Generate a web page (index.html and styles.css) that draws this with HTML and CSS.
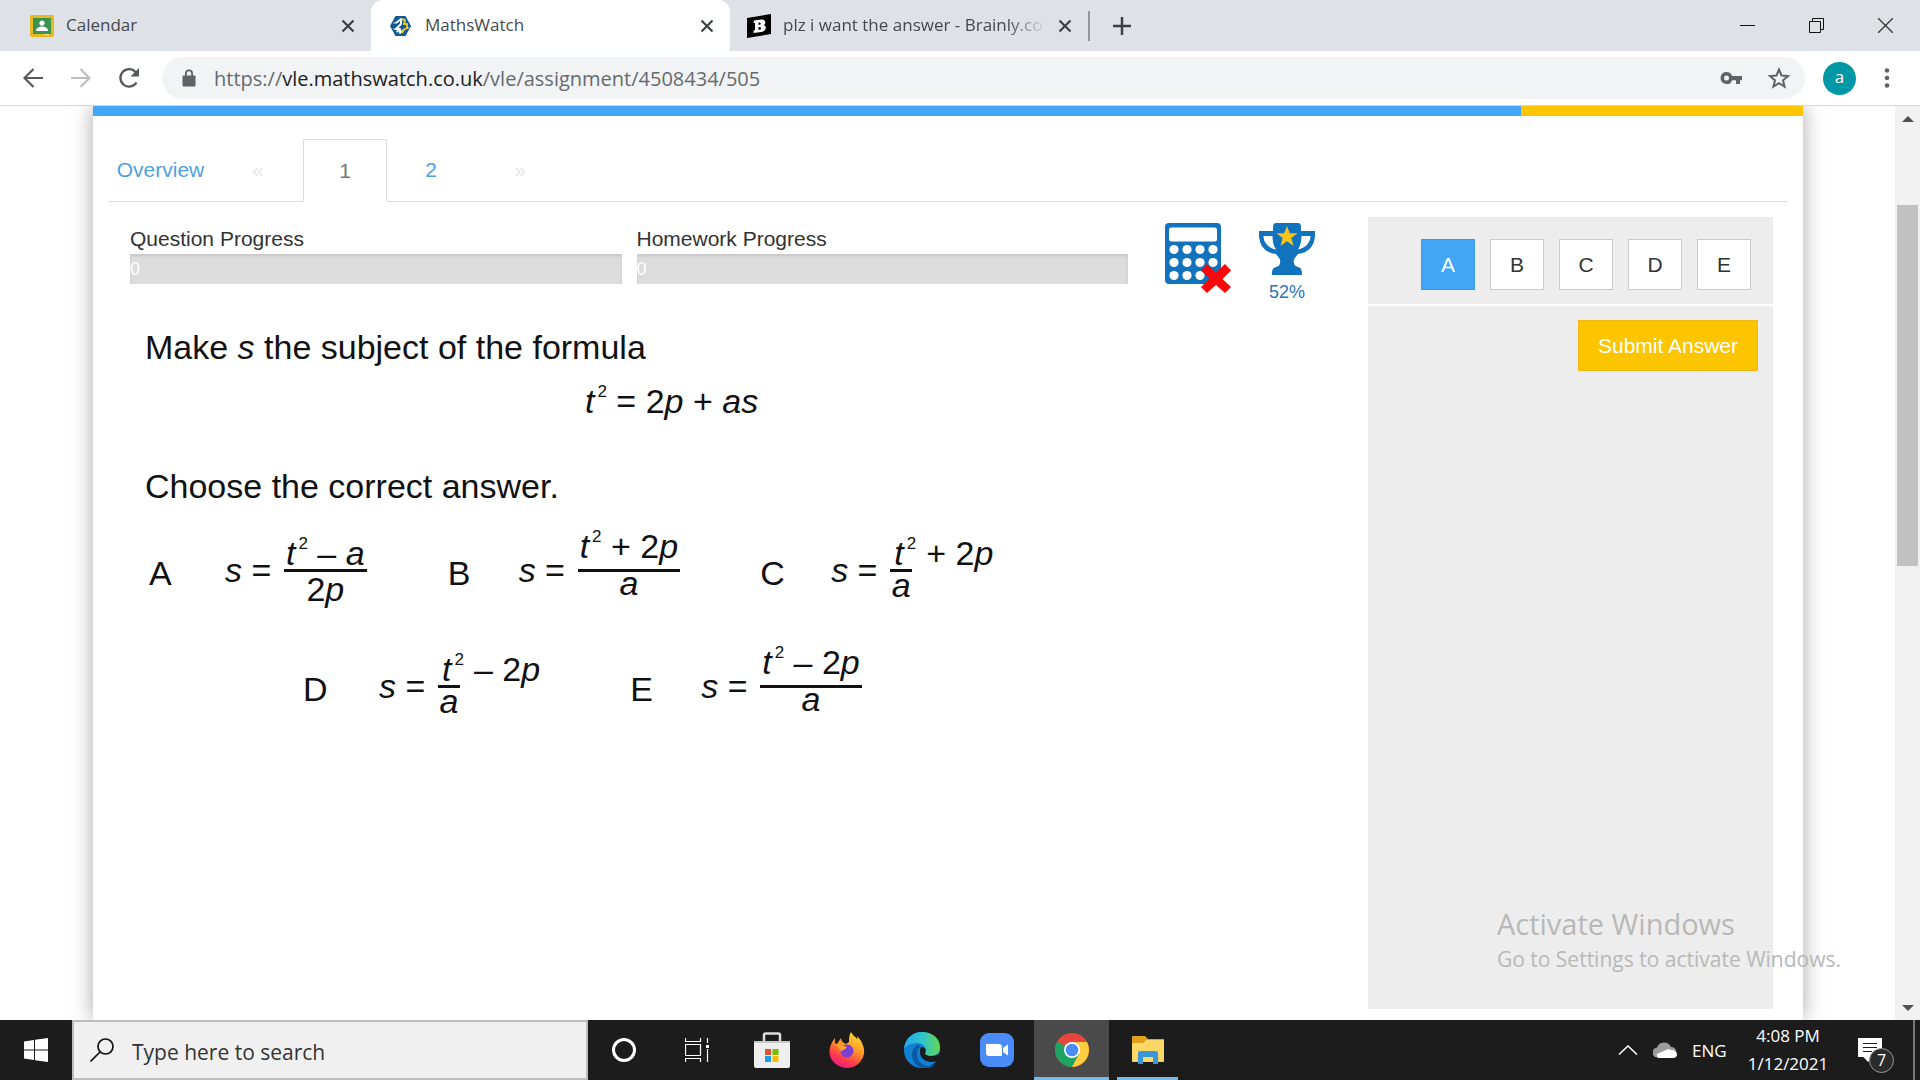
FILE: index.html
```html
<!DOCTYPE html>
<html lang="en">
<head>
<meta charset="utf-8">
<title>MathsWatch</title>
<link rel="stylesheet" href="styles.css">
</head>
<body>
<header class="browser">
  <div class="tabstrip">
    <div class="tab tab-first">
      <svg class="favicon" viewBox="0 0 24 24"><rect x="0" y="1" width="24" height="22" rx="2" fill="#e8b820"/><rect x="3" y="4" width="18" height="16" fill="#3c9350"/><circle cx="12" cy="9" r="2.6" fill="#fff"/><path d="M6 17c0-3 3-4.500 6-4.500s6 1.500 6 4.500z" fill="#fff"/><path d="M14 20h5v1h-5z" fill="#f8e48c"/></svg>
      <span class="tab-title">Calendar</span>
      <button class="icon-btn tab-close" aria-label="Close tab"><svg width="14" height="14" viewBox="0 0 14 14"><path d="M1.500 1.500l11 11M12.500 1.500l-11 11" stroke="#3c4043" stroke-width="2.200"/></svg></button>
    </div>
    <div class="tab tab-active">
      <svg class="favicon" viewBox="0 0 24 24"><path d="M6.500 2h10l5.500 10-5.500 10h-10L1 12z" fill="#125a94"/><path d="M11.500 15l-4 3M7 9l5-4v5l-5 5h4v4l4-3" fill="none" stroke="#fff" stroke-width="1.900" stroke-linejoin="round"/><path d="M12 5l4 1-1 4h3v4l-4 2-1 3M16 6l-1 4" fill="none" stroke="#f4c530" stroke-width="1.900" stroke-linejoin="round"/><path d="M7 9H4.500M7 15H4.500M18 14h2" stroke="#fff" stroke-width="1.200"/></svg>
      <span class="tab-title">MathsWatch</span>
      <button class="icon-btn tab-close" aria-label="Close tab"><svg width="14" height="14" viewBox="0 0 14 14"><path d="M1.500 1.500l11 11M12.500 1.500l-11 11" stroke="#3c4043" stroke-width="2.200"/></svg></button>
    </div>
    <div class="tab tab-last">
      <svg class="favicon" viewBox="0 0 24 24"><path d="M0 4L24 0v20L0 24z" fill="#000"/><path fill="#fff" fill-rule="evenodd" d="M7 6.500L14 5.500c5-.5 5.500 4.500 2.500 5.500 4 1 2.500 6.500-2 7l-8 1v-2.500l1.500-.3V9L6.500 9zM11.500 8.500v2.500c3 0 3-3 0-2.500zM11.500 13v3c3.500 0 3.500-3.500 0-3z"/></svg>
      <span class="tab-title tab-fade">plz i want the answer - Brainly.co</span>
      <button class="icon-btn tab-close" aria-label="Close tab"><svg width="14" height="14" viewBox="0 0 14 14"><path d="M1.500 1.500l11 11M12.500 1.500l-11 11" stroke="#3c4043" stroke-width="2.200"/></svg></button>
    </div>
    <button class="icon-btn new-tab" aria-label="New tab"><svg width="18" height="18" viewBox="0 0 18 18"><path d="M9 0v18M0 9h18" stroke="#3c4043" stroke-width="2.500"/></svg></button>
    <div class="window-controls">
      <button class="icon-btn" aria-label="Minimise"><svg width="15" height="15" viewBox="0 0 15 15"><path d="M0 7.500h15" stroke="#111"/></svg></button>
      <button class="icon-btn" aria-label="Restore"><svg width="15" height="15" viewBox="0 0 15 15"><path d="M.5 3.500h11v11H.5zM3.500 3.500v-3h11v11h-3" fill="none" stroke="#111"/></svg></button>
      <button class="icon-btn" aria-label="Close"><svg width="15" height="15" viewBox="0 0 15 15"><path d="M0 0l15 15M15 0L0 15" stroke="#333" stroke-width="1.300"/></svg></button>
    </div>
  </div>
  <div class="toolbar">
    <button class="icon-btn nav-btn" aria-label="Back"><svg width="20" height="20" viewBox="0 0 20 20"><path d="M20 10H2M10.500 1L1.500 10l9 9" fill="none" stroke="#55585c" stroke-width="2.200"/></svg></button>
    <button class="icon-btn nav-btn" aria-label="Forward"><svg width="20" height="20" viewBox="0 0 20 20"><path d="M0 10h18M9.500 1l9 9-9 9" fill="none" stroke="#bcbec1" stroke-width="2.200"/></svg></button>
    <button class="icon-btn nav-btn" aria-label="Reload"><svg width="22" height="22" viewBox="0 0 22 22"><path d="M18.500 15.500A8.700 8.700 0 1 1 17.500 5" fill="none" stroke="#55585c" stroke-width="2.300"/><path d="M21 1v8.500h-8.500z" fill="#55585c"/></svg></button>
    <div class="omnibox">
      <svg width="14" height="18" viewBox="0 0 14 18"><path fill="#5f6368" fill-rule="evenodd" d="M3 6.500V4.500a4 4 0 0 1 8 0v2h1.500q1 0 1 1V16.500q0 1-1 1h-11q-1 0-1-1V7.500q0-1 1-1zM4.800 6.500h4.400v-2a2.200 2.200 0 0 0-4.400 0z"/></svg>
      <span class="url">https://<b>vle.mathswatch.co.uk</b>/vle/assignment/4508434/505</span>
      <button class="icon-btn" aria-label="Passwords"><svg width="22" height="14" viewBox="0 0 22 14"><path fill="#5f6368" fill-rule="evenodd" d="M6.500 1a6 6 0 0 1 5.700 4H22v4.200h-2V13h-4V9.200h-3.800A6 6 0 1 1 6.500 1zm0 3.600a2.500 2.500 0 1 0 0 5 2.500 2.500 0 0 0 0-5z"/></svg></button>
      <button class="icon-btn star" aria-label="Bookmark this page"><svg width="22" height="22" viewBox="0 0 22 22"><path d="M11 2.500l2.500 6 6.500.6-5 4.200 1.600 6.400L11 16.200l-5.600 3.500L7 13.300 2 9.100l6.500-.6z" fill="none" stroke="#5f6368" stroke-width="2"/></svg></button>
    </div>
    <button class="avatar" aria-label="Profile">a</button>
    <button class="icon-btn menu" aria-label="Menu"><svg width="6" height="20" viewBox="0 0 6 20"><g fill="#5f6368"><circle cx="3" cy="2.500" r="2.300"/><circle cx="3" cy="10" r="2.300"/><circle cx="3" cy="17.500" r="2.300"/></g></svg></button>
  </div>
</header>

<div class="viewport">
  <main class="card">
    <div class="stripe"><div class="stripe-blue"></div><div class="stripe-yellow"></div></div>
    <nav class="pages">
      <a class="page-overview" href="#">Overview</a>
      <a class="page-step" href="#">«</a>
      <a class="page-num page-current" href="#">1</a>
      <a class="page-num" href="#">2</a>
      <a class="page-step" href="#">»</a>
    </nav>
    <div class="columns">
      <section class="work">
        <div class="status">
          <div class="progress"><span>Question Progress</span><div class="bar">0</div></div>
          <div class="progress"><span>Homework Progress</span><div class="bar">0</div></div>
          <svg class="calc" width="66" height="70" viewBox="0 0 66 70"><rect width="56" height="61" rx="4" fill="#1173bd"/><rect x="4" y="4.500" width="48" height="14" rx="2.500" fill="#fff"/><g fill="#fff"><circle cx="9" cy="26.500" r="4.600"/><circle cx="22" cy="26.500" r="4.600"/><circle cx="35" cy="26.500" r="4.600"/><circle cx="48" cy="26.500" r="4.600"/><circle cx="9" cy="39.500" r="4.600"/><circle cx="22" cy="39.500" r="4.600"/><circle cx="35" cy="39.500" r="4.600"/><circle cx="48" cy="39.500" r="4.600"/><circle cx="9" cy="52.500" r="4.600"/><circle cx="22" cy="52.500" r="4.600"/><circle cx="35" cy="52.500" r="4.600"/></g><path d="M42 41l9 8.500L60 41l6 6.500-8.500 8.500L66 64l-6 6-9-8-9 8-6-6 8.500-8.500L36 47.500z" fill="#f80808"/></svg>
          <div class="trophy">
            <svg width="56" height="52" viewBox="0 0 56 52"><path d="M17 0h22q3 0 3 4v4h14c1 13-5 22-17 23-3 4-5 5-4 9 .5 3 2 3.500 4 4 3 1 4 2 4 8H13c0-6 1-7 4-8 2-.5 3.500-1 4-4 1-4-1-5-4-9C5 30-1 21 0 8h14V4q0-4 3-4z" fill="#1173bd"/><path d="M4.500 13h9c0 5 1 10 3.500 13.500C9 25 4.500 19 4.500 13zM51.500 13h-9c0 5-1 10-3.500 13.500C47 25 51.500 19 51.500 13z" fill="#fff"/><path d="M28 3l2.800 7.300h7.700l-6.200 4.800 2.300 7.900-6.600-4.700-6.600 4.700 2.300-7.900-6.200-4.800h7.700z" fill="#fcc419"/></svg>
            <span>52%</span>
          </div>
        </div>
        <article class="question">
          <p>Make <i>s</i> the subject of the formula</p>
          <p class="formula"><i>t</i><sup>2</sup> = 2<i>p</i> + <i>as</i></p>
          <p class="prompt">Choose the correct answer.</p>
          <div class="options">
            <div class="option opt-wide"><span class="letter">A</span><span class="lhs"><i>s</i> =</span><span class="frac"><span class="num"><span><i>t</i><sup>2</sup> – <i>a</i></span></span><span class="den den-low">2<i>p</i></span></span></div>
            <div class="option opt-b"><span class="letter">B</span><span class="lhs"><i>s</i> =</span><span class="frac"><span class="num num-high"><span><i>t</i><sup>2</sup> + 2<i>p</i></span></span><span class="den"><i>a</i></span></span></div>
            <div class="option opt-c"><span class="letter">C</span><span class="lhs"><i>s</i> =</span><span class="frac frac-narrow"><span class="num"><span><i>t</i><sup>2</sup></span></span><span class="den"><i>a</i></span></span><span class="term">+ 2<i>p</i></span></div>
          </div>
          <div class="options options-second">
            <div class="option opt-wide"><span class="letter">D</span><span class="lhs"><i>s</i> =</span><span class="frac frac-narrow"><span class="num"><span><i>t</i><sup>2</sup></span></span><span class="den"><i>a</i></span></span><span class="term">– 2<i>p</i></span></div>
            <div class="option opt-e"><span class="letter">E</span><span class="lhs"><i>s</i> =</span><span class="frac"><span class="num num-high"><span><i>t</i><sup>2</sup> – 2<i>p</i></span></span><span class="den"><i>a</i></span></span></div>
          </div>
        </article>
      </section>
      <aside class="answers">
        <div class="choices">
          <button class="choice chosen" aria-pressed="true">A</button>
          <button class="choice">B</button>
          <button class="choice">C</button>
          <button class="choice">D</button>
          <button class="choice">E</button>
        </div>
        <div class="submit-row"><button class="submit">Submit Answer</button></div>
      </aside>
    </div>
  </main>
  <div class="scrollbar">
    <svg width="12" height="6" viewBox="0 0 12 6"><path d="M0 6l6-6 6 6z" fill="#505050"/></svg>
    <div class="track"><div class="thumb"></div></div>
    <svg width="12" height="6" viewBox="0 0 12 6"><path d="M0 0l6 6 6-6z" fill="#505050"/></svg>
  </div>
  <div class="watermark"><div class="wm-title">Activate Windows</div><div class="wm-text">Go to Settings to activate Windows.</div></div>
</div>

<footer class="taskbar">
  <button class="icon-btn start" aria-label="Start"><svg width="24" height="24" viewBox="0 0 24 24"><path fill="#fff" d="M0 3.500l10-1.500v9.500H0zM11 1.800L24 0v11.500H11zM0 12.500h10V22L0 20.500zM11 12.500h13V24l-13-1.800z"/></svg></button>
  <div class="search">
    <svg width="24" height="24" viewBox="0 0 24 24"><circle cx="15.500" cy="8.500" r="7.500" fill="none" stroke="#111" stroke-width="1.700"/><path d="M10 14L.5 23.500" stroke="#111" stroke-width="1.700"/></svg>
    <input type="text" placeholder="Type here to search" aria-label="Type here to search">
  </div>
  <div class="apps">
    <button class="app" aria-label="Cortana"><svg width="26" height="26" viewBox="0 0 26 26"><circle cx="13" cy="13" r="10.500" fill="none" stroke="#fff" stroke-width="3"/></svg></button>
    <button class="app" aria-label="Task view"><svg width="24" height="24" viewBox="0 0 24 24"><path d="M.5 0v3.500h15V0M.5 6.500h15v11H.5zM.5 24v-3.500h15V24M22.500 0v5M22.500 11v13" fill="none" stroke="#fff" stroke-width="1.200"/><path d="M21 7h3v3h-3z" fill="#fff"/></svg></button>
    <button class="app" aria-label="Microsoft Store"><svg width="36" height="36" viewBox="0 0 36 36"><path d="M10 12V3q0-1.500 1.500-1.500h13q1.500 0 1.500 1.500v9" fill="none" stroke="#ddd" stroke-width="2.500"/><path d="M0 9h36v25q0 2-2 2H2q-2 0-2-2z" fill="#efefef"/><path d="M0 9h36v2H0z" fill="#c9c9c9"/><path d="M11 17h6v6h-6z" fill="#e84f2c"/><path d="M18.500 17h6v6h-6z" fill="#7fb900"/><path d="M11 24h6v6h-6z" fill="#13a3ec"/><path d="M18.500 24h6v6h-6z" fill="#fdb900"/></svg></button>
    <button class="app" aria-label="Firefox"><svg width="36" height="36" viewBox="0 0 36 36"><defs><linearGradient id="ff" x1=".8" y1="0" x2=".3" y2="1"><stop offset="0" stop-color="#ffe42e"/><stop offset=".45" stop-color="#ff9328"/><stop offset=".75" stop-color="#ff3c4a"/><stop offset="1" stop-color="#e81b86"/></linearGradient></defs><path d="M22 0c2 4 4 4 6 7 1 0 0-2 0-3 5 5 8 12 7 18-2 8-8 14-17 14S1 29 .5 21C.3 14 3 10 6 6v5l2 1 4-6c0 3 2 5 5 6l3-2c0-4 0-7 2-10z" fill="url(#ff)"/><circle cx="18" cy="19" r="6.500" fill="#7a3fd0"/><path d="M6 13c4-2 6 0 9 1l3 1c-2 3-5 3-6 5 0-3-3-4-6-7z" fill="#ffa12a"/></svg></button>
    <button class="app" aria-label="Edge"><svg width="36" height="36" viewBox="0 0 36 36"><defs><linearGradient id="eg"><stop offset="0" stop-color="#23a7e8"/><stop offset=".5" stop-color="#30c3cf"/><stop offset="1" stop-color="#62d94e"/></linearGradient></defs><circle cx="18" cy="18" r="18" fill="#1280d4"/><path d="M0 17C1 6 9 0 18 0c11 0 18 7 18 15 0 6-4 9-9 9-4 0-6-1-6-2 0-1 1-1 1-4 0-3-3-7-9-7-6 0-11 3-13 6z" fill="url(#eg)"/><path d="M16 15c-5 3-4 14 4 18 6 3 11 0 13-3-4 7-12 7-17 5C8 32 5 20 12 14c2-2 4-1 4 1z" fill="#0b58a5"/><path d="M17 15c4 0 6 3 4 6 0 2 3 3 6 3 4 0 7-1 9-3v4l-3 4c-8 3-17-1-17-9 0-2 0-3 1-5z" fill="#1c1c1c"/></svg></button>
    <button class="app" aria-label="Zoom"><svg width="34" height="34" viewBox="0 0 34 34"><rect width="34" height="34" rx="9" fill="#4a8cf7"/><path d="M6 11h13q3 0 3 3v9H9q-3 0-3-3zM23 15l5-3.500v11L23 19z" fill="#fff"/></svg></button>
    <button class="app app-open app-focus" aria-label="Chrome"><svg width="34" height="34" viewBox="0 0 34 34"><circle cx="17" cy="17" r="17" fill="#e8453c"/><path d="M17 17L2.300 8.500A17 17 0 0 0 17 34l7-13z" fill="#1da462"/><path d="M17 9h15a17 17 0 0 1-15 25l7-13z" fill="#ffcd40"/><circle cx="17" cy="17" r="8" fill="#fff"/><circle cx="17" cy="17" r="6.300" fill="#4c8bf5"/></svg></button>
    <button class="app app-open" aria-label="File Explorer"><svg width="32" height="28" viewBox="0 0 32 28"><path d="M0 1q0-1 1-1h12l3 3h16v22H0z" fill="#e0a11b"/><path d="M0 7h11l3-3h18v21q0 1-1 1H1q-1 0-1-1z" fill="#fbd768"/><path d="M6 28V17q0-2 2-2h16q2 0 2 2v11h-5v-7H11v7z" fill="#3a96d8"/></svg></button>
  </div>
  <div class="tray">
    <svg width="20" height="10" viewBox="0 0 20 10"><path d="M1 9.500l9-8.500 9 8.500" fill="none" stroke="#fff" stroke-width="1.500"/></svg>
    <svg width="24" height="16" viewBox="0 0 24 16"><path d="M5 15.500a5 5 0 0 1-1-10A7.500 7.500 0 0 1 18 5a5 5 0 0 1 5 4z" fill="#9c9c9c"/><path d="M5 16a4 4 0 0 1-1-4c2-1 4-2 7-3 3-2 5-2 7-1 4 0 6 2 6 4.500S22 16 20 16z" fill="#fff"/></svg>
    <span class="lang">ENG</span>
    <div class="clock"><span>4:08 PM</span><span>1/12/2021</span></div>
    <button class="icon-btn notify" aria-label="7 notifications"><svg width="24" height="24" viewBox="0 0 24 24"><path d="M0 0h24v19H14.500L10 24l-4.500-5H0z" fill="#fff"/><path d="M5 5.500h14M5 9.500h14M5 13.500h9" stroke="#1c1c1c" stroke-width="1.200"/></svg><span class="badge">7</span></button>
    <div class="desktop-edge"></div>
  </div>
</footer>
</body>
</html>
```

FILE: styles.css
```css
* { box-sizing: border-box; }

body {
  margin: 0;
  height: 100vh;
  display: flex;
  flex-direction: column;
  overflow: hidden;
  background: #fff;
  font-family: "Liberation Sans", Arial, sans-serif;
  font-size: 21px;
  color: #333;
}

button, input { font: inherit; }
svg { display: block; flex: none; }

.icon-btn {
  display: flex;
  align-items: center;
  justify-content: center;
  padding: 0;
  border: 0;
  background: none;
}

/* Browser chrome */
.browser, .taskbar, .watermark { font-family: "Open Sans", "Noto Sans", sans-serif; }
.browser { flex: none; border-bottom: 1px solid #d5d7da; }

.tabstrip {
  display: flex;
  align-items: center;
  height: 51px;
  background: #dee1e6;
}
.tab {
  display: flex;
  align-items: center;
  gap: 12px;
  height: 51px;
  font-size: 17px;
  color: #45494d;
}
.tab-first { width: 371px; padding: 0 16px 0 30px; }
.tab-active {
  width: 359px;
  padding: 0 16px 0 18px;
  border-radius: 12px 12px 0 0;
  background: #fff;
}
.tab-last {
  width: 360px;
  height: 30px;
  padding: 0 16px 0 17px;
  border-right: 2px solid #93969b;
}
.favicon { width: 24px; height: 24px; }
.tab-title { flex: 1; padding-bottom: 2px; white-space: nowrap; }
.tab-fade {
  -webkit-mask-image: linear-gradient(to right, #000 85%, transparent);
  mask-image: linear-gradient(to right, #000 85%, transparent);
}
.new-tab { width: 64px; height: 51px; }
.window-controls { display: flex; margin-left: auto; }
.window-controls .icon-btn { width: 69px; height: 42px; }

.toolbar {
  display: flex;
  align-items: center;
  height: 54px;
  padding: 0 23px 0 9px;
}
.nav-btn { width: 48px; height: 48px; }
.omnibox {
  flex: 1;
  display: flex;
  align-items: center;
  gap: 18px;
  height: 42px;
  margin-left: 9px;
  padding: 0 7px 0 20px;
  border-radius: 21px;
  background: #f1f3f4;
}
.url { flex: 1; font-size: 20px; color: #666a6e; }
.url b { font-weight: 400; color: #202124; }
.star { width: 38px; }
.avatar {
  width: 33px;
  height: 33px;
  margin: 0 21px 0 18px;
  padding: 0 0 2px;
  border: 0;
  border-radius: 50%;
  background: #0097a7;
  color: #fff;
  font-size: 17px;
  line-height: 28px;
}
.menu { width: 20px; }

/* Page */
.viewport {
  position: relative;
  flex: 1;
  min-height: 0;
  display: flex;
  overflow: hidden;
}
.card {
  flex: 1;
  display: flex;
  flex-direction: column;
  margin: 0 92px 0 93px;
  background: #fff;
  box-shadow: 0 0 20px rgba(0, 0, 0, .35);
}
.stripe { display: flex; height: 10px; }
.stripe-blue { flex: 1428; background: #42a5f5; }
.stripe-yellow { flex: 282; background: #fdc500; }

.pages {
  display: flex;
  height: 63px;
  margin: 23px 15px 0;
  border-bottom: 1px solid #ddd;
}
.pages a {
  height: 63px;
  line-height: 62px;
  text-align: center;
  text-decoration: none;
  color: #4fa0e0;
}
.pages .page-overview { width: 105px; }
.pages .page-step { width: 90px; color: #e6e6e6; }
.pages .page-num { width: 88px; }
.pages .page-current {
  width: 84px;
  border: 1px solid #ddd;
  border-bottom-color: #fff;
  color: #777;
  background: #fff;
}

.columns { flex: 1; display: flex; margin: 15px 30px 11px 37px; }
.work { flex: 1; padding-right: 53px; }
.status { display: flex; gap: 15px; }
.progress { flex: 1; padding-top: 8px; }
.progress span { display: block; height: 29px; line-height: 28px; }
.bar {
  height: 30px;
  background: #dcdcdc;
  box-shadow: inset 0 2px 3px rgba(0, 0, 0, .1);
  color: #fff;
  font-size: 18px;
  line-height: 30px;
}
.calc { margin: 6px 0 0 22px; }
.trophy {
  display: flex;
  flex-direction: column;
  align-items: center;
  gap: 7px;
  margin: 6px 0 0 13px;
  color: #2775b3;
  font-size: 18px;
  line-height: 20px;
}

.question { padding: 25px 0 0 15px; font-size: 34px; color: #111; }
.question p { margin: 0; line-height: 40px; }
.question sup {
  margin-left: 3px;
  font-size: 17px;
  line-height: 0;
  vertical-align: 16px;
}
.question .formula { margin: 14px 0 45px 440px; }

.options { display: flex; height: 95px; margin-top: 17px; }
.options-second { margin: 21px 0 0 154px; }
.option { display: flex; align-items: center; height: 95px; }
.opt-b { margin-left: 77px; }
.opt-c { margin-left: 76px; }
.opt-e { margin-left: 86px; }
.letter { width: 75px; padding: 6px 0 0 4px; }
.opt-wide .letter { width: 80px; }
.lhs { width: 59px; }
.frac { display: flex; flex-direction: column; text-align: center; }
.num {
  display: flex;
  flex-direction: column;
  justify-content: flex-end;
  align-items: center;
  height: 46px;
  padding: 0 2px;
  line-height: 32px;
  white-space: nowrap;
}
.num-high { line-height: 46px; }
.den { height: 49px; border-top: 3px solid #111; line-height: 22px; }
.den-low { line-height: 34px; }
.frac-narrow { width: 22px; }
.frac-narrow .num { align-items: flex-start; padding-left: 4px; }
.frac-narrow .den { line-height: 26px; }
.term { align-self: flex-start; margin-left: 14px; line-height: 60px; }

.answers { width: 405px; background: #ededed; }
.choices {
  display: flex;
  justify-content: flex-end;
  gap: 15px;
  height: 89px;
  padding: 22px 22px 15px 0;
  border-bottom: 2px solid #fff;
}
.choice {
  width: 54px;
  height: 51px;
  padding: 0;
  border: 1px solid #ccc;
  background: #fff;
  color: #333;
}
.chosen { border-color: #3b9bea; background: #42a5f5; color: #fff; }
.submit-row { display: flex; justify-content: flex-end; padding: 14px 15px 0 0; }
.submit {
  width: 180px;
  height: 51px;
  padding: 0;
  border: 1px solid #eeb811;
  background: #fdc500;
  color: #fff;
}

.scrollbar {
  display: flex;
  flex-direction: column;
  align-items: center;
  width: 25px;
  padding: 10px 0 9px;
  background: #f1f1f1;
}
.track { flex: 1; padding-top: 83px; }
.thumb { width: 21px; height: 45%; min-height: 361px; background: #c1c1c1; }

.watermark { position: absolute; right: 79px; bottom: 46px; color: #b8b8b8; }
.wm-title { font-size: 29px; line-height: 40px; }
.wm-text { font-size: 21px; line-height: 30px; }

/* Taskbar */
.taskbar { flex: none; display: flex; height: 60px; background: #1c1c1c; color: #fff; }
.start { width: 72px; }
.search {
  display: flex;
  align-items: center;
  gap: 18px;
  width: 516px;
  padding-left: 16px;
  border: 2px solid #bdbdbd;
  background: #f0f0f0;
}
.search input {
  flex: 1;
  min-width: 0;
  padding: 3px 0 0;
  border: 0;
  outline: 0;
  background: none;
  font-size: 21px;
}
.search input::placeholder { color: #333; opacity: 1; }
.apps { display: flex; }
.app {
  display: flex;
  align-items: center;
  justify-content: center;
  width: 75px;
  padding: 0;
  border: 0;
  border-top: 3px solid transparent;
  border-bottom: 3px solid transparent;
  background: none;
}
.app:first-child { width: 71px; }
.app-open { border-bottom-color: #76b9ed; }
.app-open:last-child { width: 61px; margin-left: 8px; }
.app-focus { border-top-color: #4a4a4a; background-color: #4a4a4a; }
.tray { display: flex; align-items: center; margin-left: auto; font-size: 17px; }
.tray > svg { margin-right: 15px; }
.lang { width: 54px; }
.clock {
  display: flex;
  flex-direction: column;
  align-items: center;
  width: 84px;
  line-height: 28px;
}
.notify { position: relative; width: 24px; height: 24px; margin-left: 28px; }
.badge {
  position: absolute;
  left: 11px;
  top: 10px;
  width: 25px;
  height: 25px;
  border: 1px solid #999;
  border-radius: 50%;
  background: #2b2b2b;
  color: #fff;
  font-size: 16px;
  line-height: 22px;
  text-align: center;
}
.desktop-edge { width: 7px; height: 60px; margin-left: 31px; border-left: 2px solid #777; }
```
